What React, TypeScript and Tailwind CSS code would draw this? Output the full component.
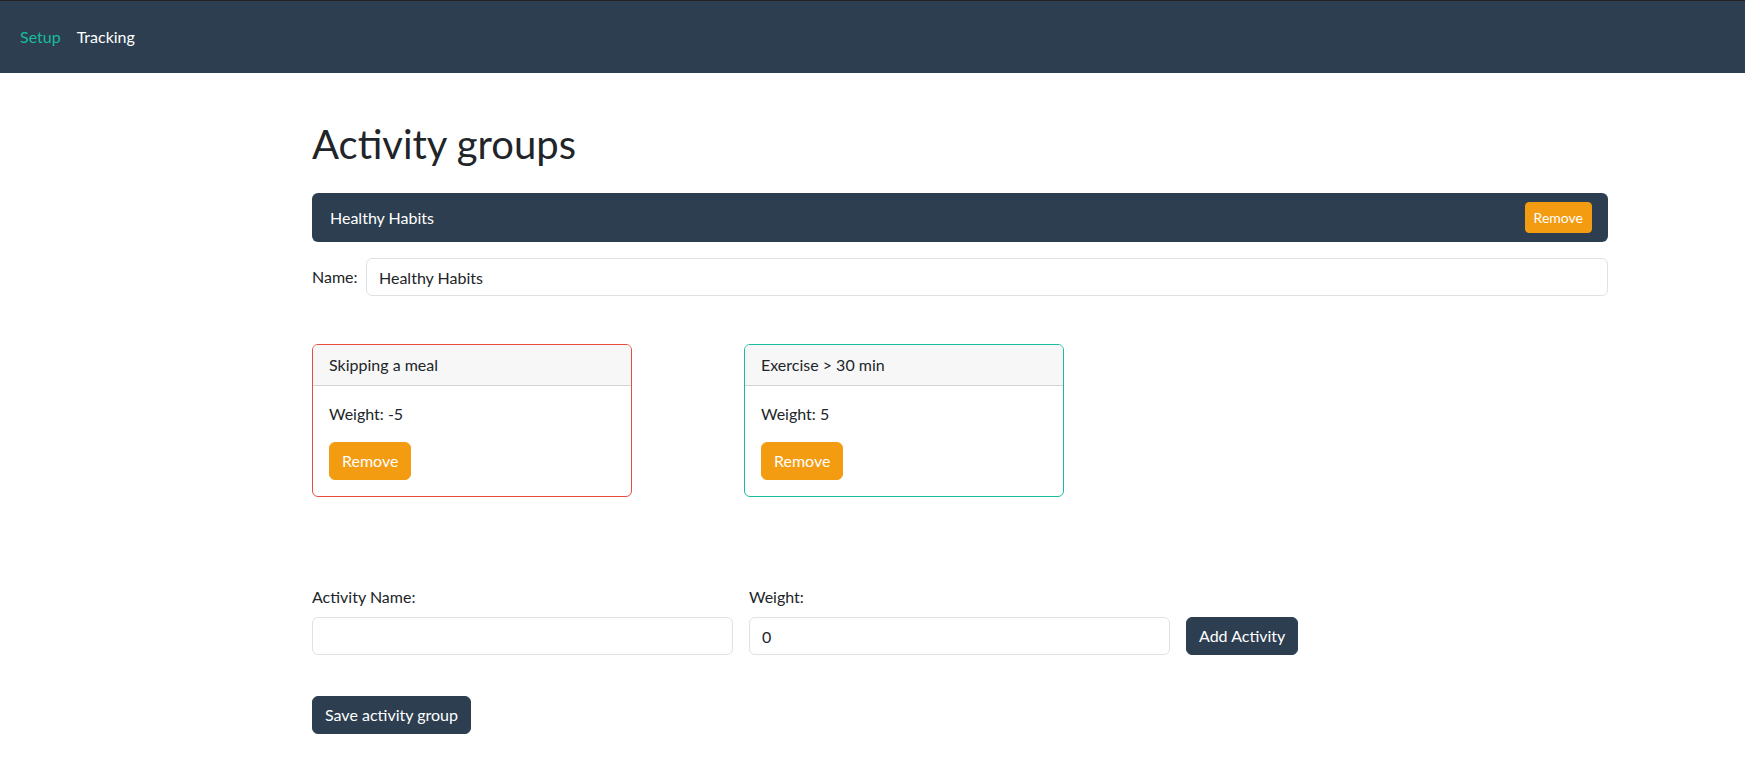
type Activity = {
    name: string
    weight: number
    border: string
}

const activities: Activity[] = [
    { name: 'Skipping a meal', weight: -5, border: 'border-[#e74c3c]' },
    { name: 'Exercise > 30 min', weight: 5, border: 'border-[#18bc9c]' },
]

function ActivityCard({ activity }: { activity: Activity }) {
    return (
        <div className={`w-[320px] rounded-[6px] border ${activity.border} overflow-hidden`}>
            <div className="bg-[#f7f7f7] border-b border-[#d3d3d3] px-4 py-2 leading-[1.5]">
                {activity.name}
            </div>
            <div className="p-4">
                <p className="mb-4 leading-[1.5]">Weight: {activity.weight}</p>
                <button className="h-[38px] bg-[#f39c12] text-white border border-[#f39c12] rounded-[6px] px-3 leading-[1.5]">
                    Remove
                </button>
            </div>
        </div>
    )
}

export default function App() {
    return (
        <div className="min-h-screen bg-white text-[#212529] text-[16px] font-['Lato','Noto_Sans',sans-serif]">
            <nav className="h-[73px] bg-[#2c3e50] border-t border-[#222] flex items-center px-3 text-[16px] leading-[1.5]">
                <a className="px-2 text-[#18bc9c]" href="#">Setup</a>
                <a className="px-2 text-white" href="#">Tracking</a>
            </nav>

            <main className="ml-[312px] w-[1296px]">
                <h1 className="mt-[47px] text-[40px] leading-[1.2] font-normal">Activity groups</h1>

                <div className="mt-[25px] h-[49px] bg-[#2c3e50] rounded-[6px] flex items-center justify-between pl-[18px] pr-[16px] text-white">
                    <span className="leading-[1.5]">Healthy Habits</span>
                    <button className="h-[31px] px-2 bg-[#f39c12] border border-[#f39c12] text-white rounded-[4px] text-[14px]">
                        Remove
                    </button>
                </div>

                <div className="mt-4 flex items-center">
                    <label className="w-[54px] leading-[1.5]">Name:</label>
                    <input
                        type="text"
                        defaultValue="Healthy Habits"
                        className="flex-1 h-[38px] border border-[#dee2e6] rounded-[6px] px-3 outline-none"
                    />
                </div>

                <div className="mt-[48px] grid grid-cols-3">
                    {activities.map((a) => (
                        <ActivityCard key={a.name} activity={a} />
                    ))}
                </div>

                <div className="mt-[88px] flex items-end gap-4">
                    <div className="flex flex-col w-[421px]">
                        <label className="leading-[1.5] mb-2">Activity Name:</label>
                        <input type="text" className="h-[38px] border border-[#dee2e6] rounded-[6px] px-3 outline-none" />
                    </div>
                    <div className="flex flex-col w-[421px]">
                        <label className="leading-[1.5] mb-2">Weight:</label>
                        <input
                            type="number"
                            defaultValue={0}
                            className="h-[38px] border border-[#dee2e6] rounded-[6px] px-3 outline-none"
                        />
                    </div>
                    <button className="h-[38px] px-3 bg-[#2c3e50] border border-[#2c3e50] text-white rounded-[6px]">
                        Add Activity
                    </button>
                </div>

                <button className="mt-[41px] h-[38px] px-3 bg-[#2c3e50] border border-[#2c3e50] text-white rounded-[6px]">
                    Save activity group
                </button>
            </main>
        </div>
    )
}
